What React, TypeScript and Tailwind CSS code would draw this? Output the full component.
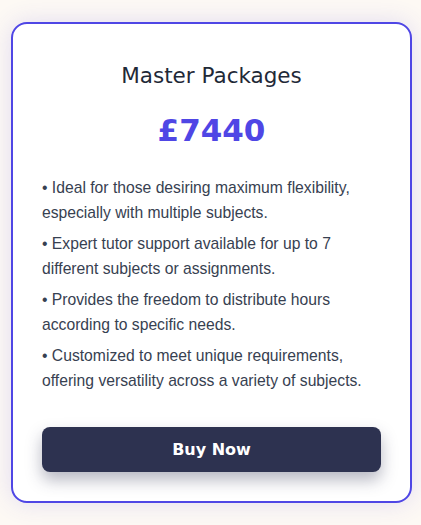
export default function App() {
  const points = [
    "Ideal for those desiring maximum flexibility, especially with multiple subjects.",
    "Expert tutor support available for up to 7 different subjects or assignments.",
    "Provides the freedom to distribute hours according to specific needs.",
    "Customized to meet unique requirements, offering versatility across a variety of subjects.",
  ];

  return (
    <div className="min-h-screen bg-[#fdf9f4] px-[11px] pt-[22px] pb-6">
      <div className="flex h-[481px] w-[401px] flex-col rounded-2xl border-2 border-[#4f46e5] bg-white px-[29px] shadow-[0_0_24px_rgba(79,70,229,0.16)]">
        <h2 className="mt-[38px] text-center font-['DejaVu_Sans',sans-serif] text-[21.5px] font-medium leading-[28px] text-[#1f2937]">
          Master Packages
        </h2>
        <p className="mt-[22px] text-center font-['DejaVu_Sans',sans-serif] text-[31px] font-bold leading-[36px] text-[#4f46e5]">
          £7440
        </p>
        <div className="mt-[28px] space-y-[7px] font-['Liberation_Sans',Arial,sans-serif] text-[15.7px] leading-[24.5px] text-[#374151]">
          {points.map((p) => (
            <p key={p}>• {p}</p>
          ))}
        </div>
        <button className="mt-auto mb-[29px] h-[45px] w-full rounded-lg bg-[#2d3250] font-['DejaVu_Sans',sans-serif] text-[16px] font-bold text-white shadow-[0_8px_16px_rgba(45,50,80,0.35)]">
          Buy Now
        </button>
      </div>
    </div>
  );
}
